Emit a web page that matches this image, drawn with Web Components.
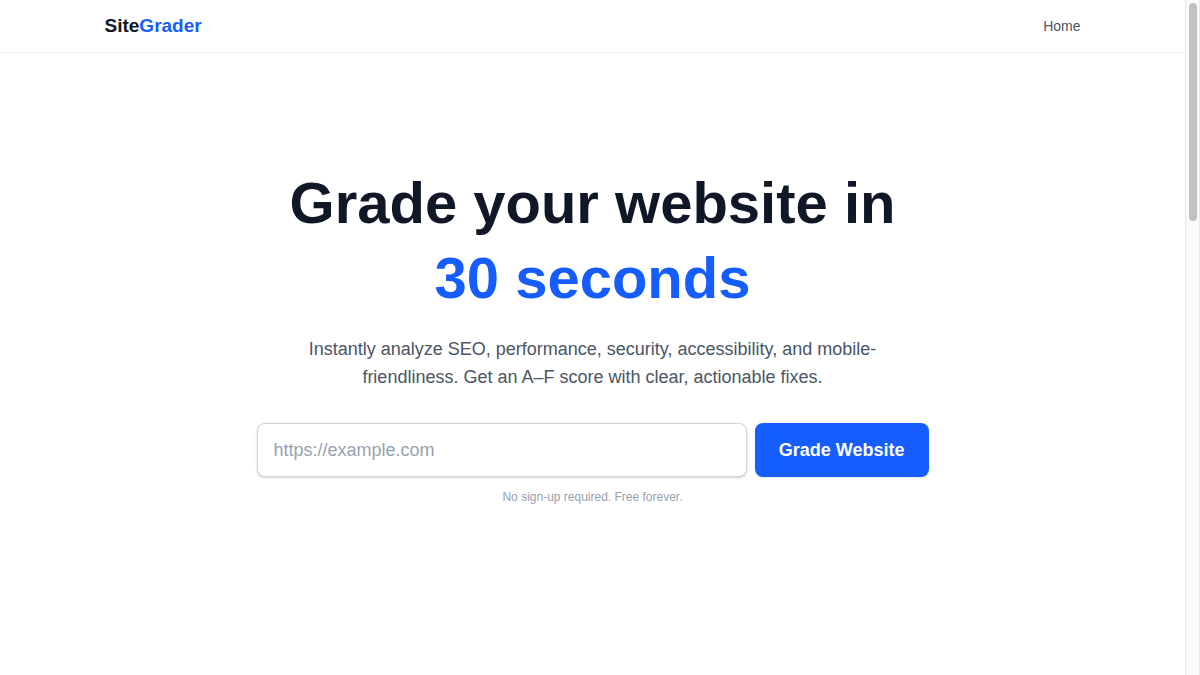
<!DOCTYPE html>
<html lang="en">
<head>
<meta charset="utf-8">
<meta name="viewport" content="width=device-width, initial-scale=1">
<title>SiteGrader</title>
<style>
  :root{
    --ink:#101828;
    --text:#4a5565;
    --muted:#99a1af;
    --line:#f0f1f5;
    --field-border:#d1d5dc;
    --brand:#155dfc;
    --brand-dark:#1447e6;
  }
  *{ box-sizing:border-box; }
  body{
    margin:0;
    background:#fff;
    color:var(--ink);
    font:16px/24px "Liberation Sans", Arial, sans-serif;
  }
</style>
</head>
<body>
<sg-shell>
  <sg-header slot="header" home="/">
    <a href="/">Home</a>
  </sg-header>
  <sg-hero>
    <span slot="title">Grade your website in</span>
    <span slot="accent">30 seconds</span>
    <span slot="lead">Instantly analyze SEO, performance, security, accessibility, and mobile-friendliness. Get an A–F score with clear, actionable fixes.</span>
    <sg-url-form placeholder="https://example.com" label="Grade Website"></sg-url-form>
    <span slot="note">No sign-up required. Free forever.</span>
  </sg-hero>
</sg-shell>

<script>
(function () {

  /* page frame: content pane + scroll rail */
  class SGShell extends HTMLElement {
    constructor(){
      super();
      this.attachShadow({ mode: 'open' }).innerHTML = `
        <style>
          :host{ display:flex; height:100vh; overflow:hidden; }
          .pane{ flex:1 1 auto; min-width:0; }
        </style>
        <div class="pane">
          <slot name="header"></slot>
          <main><slot></slot></main>
        </div>
        <sg-rail></sg-rail>
      `;
    }
  }

  class SGRail extends HTMLElement {
    constructor(){
      super();
      this.attachShadow({ mode: 'open' }).innerHTML = `
        <style>
          :host{
            display:block; box-sizing:border-box;
            flex:0 0 15px;
            padding:3px 2px 3px 3px;
            background:#fafafa;
            border-left:1px solid #e6e6e6;
            border-right:1px solid #ececec;
          }
          .thumb{ height:218px; border-radius:4px; background:#c1c1c1; }
        </style>
        <div class="thumb"></div>
      `;
    }
  }

  class SGHeader extends HTMLElement {
    constructor(){
      super();
      const root = this.attachShadow({ mode: 'open' });
      root.innerHTML = `
        <style>
          :host{ display:block; border-bottom:1px solid var(--line); }
          .bar{
            box-sizing:border-box;
            display:flex; align-items:center; justify-content:space-between;
            max-width:1024px; margin:0 auto; padding:12px 24px;
          }
          .logo{
            font-size:19px; line-height:28px; font-weight:700;
            color:var(--ink); text-decoration:none;
          }
          .logo span{ color:var(--brand); }
          nav{ display:flex; gap:24px; font-size:14px; line-height:20px; }
          ::slotted(a){ color:var(--text); text-decoration:none; }
          ::slotted(a:hover){ color:var(--ink); }
        </style>
        <header class="bar">
          <a class="logo" href="#">Site<span>Grader</span></a>
          <nav><slot></slot></nav>
        </header>
      `;
    }
    connectedCallback(){
      this.shadowRoot.querySelector('.logo').setAttribute('href', this.getAttribute('home') || '#');
    }
  }

  class SGHero extends HTMLElement {
    constructor(){
      super();
      this.attachShadow({ mode: 'open' }).innerHTML = `
        <style>
          :host{ display:block; padding:112px 24px; text-align:center; }
          .inner{ max-width:672px; margin:0 auto; }
          h1{ margin:0; font-size:58px; line-height:75px; font-weight:700; color:var(--ink); }
          .accent{ display:block; color:var(--brand); }
          .lead{
            max-width:576px; margin:20px auto 32px;
            font-size:18px; line-height:28px; color:var(--text);
          }
          .note{ margin:12px 0 0; font-size:12px; line-height:16px; color:var(--muted); }
        </style>
        <section class="inner">
          <h1><slot name="title"></slot> <span class="accent"><slot name="accent"></slot></span></h1>
          <p class="lead"><slot name="lead"></slot></p>
          <slot></slot>
          <p class="note"><slot name="note"></slot></p>
        </section>
      `;
    }
  }

  class SGUrlForm extends HTMLElement {
    static get observedAttributes() { return ['placeholder','label']; }
    constructor(){
      super();
      this.attachShadow({ mode: 'open' }).innerHTML = `
        <style>
          :host{ display:block; }
          form{ display:flex; gap:8px; }
          input, button{
            box-sizing:border-box;
            font-family:inherit; font-size:18px; line-height:28px;
            border-radius:8px;
          }
          input{
            flex:1 1 0; min-width:0; height:54px; margin:0; padding:12px 16px;
            background:#fff; color:var(--ink);
            border:1px solid var(--field-border);
            box-shadow:0 1px 3px rgba(0,0,0,.1), 0 1px 2px rgba(0,0,0,.1);
          }
          input::placeholder{ color:var(--muted); opacity:1; }
          input:focus{ outline:2px solid var(--brand); outline-offset:-1px; }
          button{
            flex:0 0 auto; margin:0; padding:12px 24px;
            border:0; background:var(--brand); color:#fff;
            font-weight:700; cursor:pointer;
            box-shadow:0 1px 2px rgba(0,0,0,.1);
          }
          button:hover{ background:var(--brand-dark); }
        </style>
        <form>
          <input type="url" name="url" aria-label="Website URL" required>
          <button type="submit"></button>
        </form>
      `;
    }

    connectedCallback(){
      this.shadowRoot.querySelector('form').addEventListener('submit', (e)=>{
        e.preventDefault();
        const url = this.shadowRoot.querySelector('input').value;
        this.dispatchEvent(new CustomEvent('grade', { detail: { url }, bubbles: true }));
      });
      this._render();
    }
    attributeChangedCallback(){ this._render(); }

    _render(){
      this.shadowRoot.querySelector('input').placeholder = this.getAttribute('placeholder') || '';
      this.shadowRoot.querySelector('button').textContent = this.getAttribute('label') || '';
    }
  }

  customElements.define('sg-rail', SGRail);
  customElements.define('sg-shell', SGShell);
  customElements.define('sg-header', SGHeader);
  customElements.define('sg-hero', SGHero);
  customElements.define('sg-url-form', SGUrlForm);
})();
</script>
</body>
</html>
